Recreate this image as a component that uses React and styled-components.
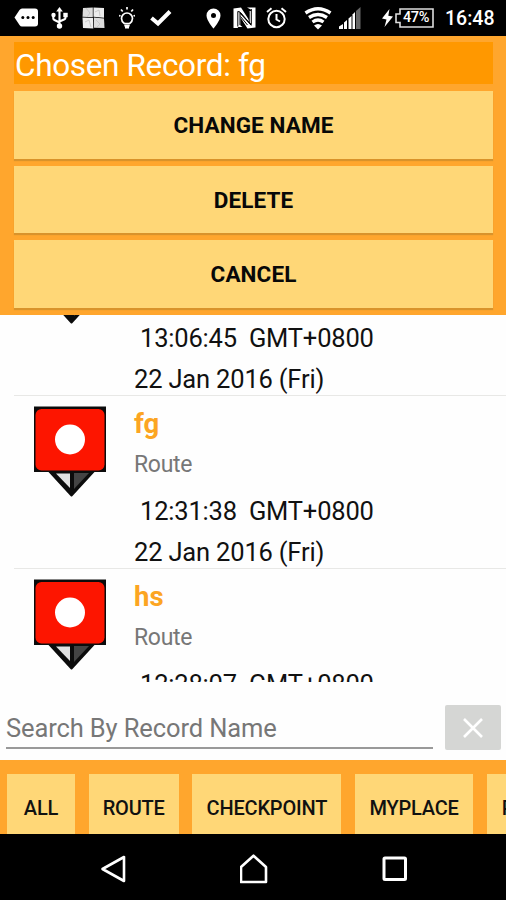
import styled, { createGlobalStyle } from "styled-components";

const actions = ["Change name", "Delete", "Cancel"];

const records = [
  { name: "gh", type: "Route", time: "13:06:45", date: "22 Jan 2016 (Fri)" },
  { name: "fg", type: "Route", time: "12:31:38", date: "22 Jan 2016 (Fri)" },
  { name: "hs", type: "Route", time: "12:28:07", date: "22 Jan 2016 (Fri)" },
];

const filters = [
  { label: "All", width: 68 },
  { label: "Route", width: 90 },
  { label: "Checkpoint", width: 149 },
  { label: "Myplace", width: 118 },
  { label: "Photo", width: 95 },
];

export default function App() {
  return (
    <>
      <GlobalStyle />
      <Screen>
        <StatusBar />
        <Panel>
          <Title>Chosen Record: fg</Title>
          {actions.map((action) => (
            <Action key={action}>{action}</Action>
          ))}
        </Panel>
        <List>
          {records.map((record) => (
            <Record key={record.name} {...record} />
          ))}
        </List>
        <SearchBar>
          <SearchInput placeholder="Search By Record Name" />
          <ClearButton title="clear">
            <svg width="20" height="20" viewBox="0 0 20 20">
              <path d="M1 1L19 19M19 1L1 19" stroke="#fff" strokeWidth="2.6" />
            </svg>
          </ClearButton>
        </SearchBar>
        <Filters>
          {filters.map(({ label, width }) => (
            <Filter key={label} $width={width}>
              {label}
            </Filter>
          ))}
        </Filters>
        <NavBar />
      </Screen>
    </>
  );
}

function Record({ name, type, time, date }) {
  return (
    <Row>
      <Marker />
      <Details>
        <Name>{name}</Name>
        <Type>{type}</Type>
        <Time>
          {time}
          <span>GMT+0800</span>
        </Time>
        <DateText>{date}</DateText>
      </Details>
    </Row>
  );
}

function Marker() {
  return (
    <MarkerIcon width="74" height="93" viewBox="0 0 74 93">
      <path d="M16 65H61L38.500 89.500Z" fill="#0c0c0c" stroke="#0c0c0c" strokeWidth="2" strokeLinejoin="round" />
      <path d="M23 67.500H37V82Z" fill="#e2e2e2" />
      <path d="M41 67H56L41 83Z" fill="#444" />
      <rect x="1" y="0.500" width="72" height="65.500" fill="#0c0c0c" />
      <rect x="2.500" y="3" width="69" height="61.500" rx="6" fill="#fd1500" />
      <circle cx="37" cy="33.500" r="15" fill="#fff" />
    </MarkerIcon>
  );
}

function StatusBar() {
  return (
    <Status>
      <StatusIcon $left={14} width="24" height="20" viewBox="0 0 24 20">
        <path d="M8 0.500H21Q24 0.500 24 3.500V15.500Q24 18.500 21 18.500H8Q6.500 18.500 5.500 17L0.500 9.500L5.500 2Q6.500 0.500 8 0.500Z" />
        <g fill="#000">
          <circle cx="8.800" cy="9.500" r="1.500" />
          <circle cx="14" cy="9.500" r="1.500" />
          <circle cx="19.200" cy="9.500" r="1.500" />
        </g>
      </StatusIcon>
      <StatusIcon $left={13} width="17" height="22" viewBox="0 0 17 22">
        <path d="M8.500 0L11.800 4.500H5.200Z" />
        <path d="M8.500 3V19M2.300 8V11.500Q2.300 12.500 3.500 13L8.500 15.500M14.500 8V10.500Q14.500 11.800 13.500 12.300L8.500 14.500" fill="none" stroke="#fff" strokeWidth="2.100" />
        <circle cx="8.500" cy="19" r="2.700" />
        <circle cx="2.500" cy="8" r="2.200" />
        <rect x="12.300" y="5.800" width="4.400" height="4.400" />
      </StatusIcon>
      <StatusIcon $left={14} width="23" height="22" viewBox="0 0 23 22">
        <path d="M1 1L10.800 0.500V10.300L0.500 9.800Z" fill="#ddd" />
        <path d="M11.500 0.500L22 1V10.800L11.500 9.800Z" fill="#ececec" />
        <path d="M0.500 10.500L11 11L11.300 21.500L1 21Z" fill="#eee" />
        <path d="M11.800 10.500L22 11.500L22.500 21L12 20.800Z" fill="#dcdcdc" />
        <path d="M4 1L8 6L5 10M13 5L17 3L18 9M3 15L7 13L9 20M14 13L18 17L15 20" fill="none" stroke="#bbb" strokeWidth="0.700" />
      </StatusIcon>
      <StatusIcon $left={14} width="16" height="22" viewBox="0 0 16 22">
        <g fill="none" stroke="#fff" strokeWidth="1.700">
          <path d="M5.300 16.500Q2.500 14.500 2.500 11.500A5.500 5.500 0 0 1 13.500 11.500Q13.500 14.500 10.700 16.500Z" />
          <path d="M5.300 18.500H10.700M6 20.500H10" strokeWidth="1.800" />
          <path d="M8 0V2.500M2 2.500L3.700 4.500M14 2.500L12.300 4.500M0 8.500L1.500 9M16 8.500L14.500 9" />
        </g>
      </StatusIcon>
      <StatusIcon $left={15} width="22" height="18" viewBox="0 0 22 18">
        <path d="M1.500 9L8 14.500L20 2.500" fill="none" stroke="#fff" strokeWidth="4" />
      </StatusIcon>
      <StatusIcon $left={34} width="15" height="21" viewBox="0 0 15 21">
        <path fillRule="evenodd" d="M7.500 0.500A7 7 0 0 1 14.500 7.500C14.500 12.500 7.500 20.500 7.500 20.500C7.500 20.500 0.500 12.500 0.500 7.500A7 7 0 0 1 7.500 0.500ZM7.500 5A2.500 2.500 0 1 0 7.500 10A2.500 2.500 0 1 0 7.500 5Z" />
      </StatusIcon>
      <StatusIcon $left={12} width="23" height="22" viewBox="0 0 23 22">
        <path d="M0.500 1.500L8 0.500L16 13V4.500L19 3.500V18L7 5V18L4.500 21H0.500Z" />
        <path d="M14 0.500H22.500V20.500L14.500 21.500L7.500 10.500V18.500L9.500 20H4V3.500L18.500 19V3Z" />
        <path d="M4.800 19.500V4.500L7 5V18M18.300 2V17.500L16.200 16V4.500M7.500 5.500L18 18M7.500 9.500L14.500 18" fill="none" stroke="#000" strokeWidth="1" />
      </StatusIcon>
      <StatusIcon $left={10} width="21" height="22" viewBox="0 0 21 22">
        <g fill="none" stroke="#fff" strokeWidth="2">
          <circle cx="10.500" cy="12" r="8.200" />
          <path d="M10.500 7V12.500L14 14.500M1 5L5.500 1.300M20 5L15.500 1.300" />
        </g>
      </StatusIcon>
      <StatusIcon $left={17} width="28" height="23" viewBox="0 0 28 23">
        <g fill="none" stroke="#fff" strokeWidth="3.400">
          <path d="M1.500 6Q14 -2.500 26.500 6" />
          <path d="M5 10.500Q14 4.500 23 10.500" />
          <path d="M8.500 15Q14 11 19.500 15" />
        </g>
        <path d="M10 18.500Q14 15.500 18 18.500L14 22.500Z" />
      </StatusIcon>
      <StatusIcon $left={7} width="22" height="22" viewBox="0 0 22 22">
        <path d="M0 22V19.500L4 17V22ZM5 22V15.500L8 13V22ZM9.500 22V11.500L12.500 9V22Z" />
        <path d="M13.500 22V7.500L16 5V22Z" />
        <path d="M17 22V4L21.500 0V22Z" fill="#666" />
      </StatusIcon>
      <StatusIcon $left={21} width="11" height="18" viewBox="0 0 11 18">
        <path d="M7.500 0L0 9.500L4.500 10.500L2.500 18L11 7.500L6.300 6.800Z" />
      </StatusIcon>
      <Battery>
        <svg width="39" height="20" viewBox="0 0 39 20">
          <path d="M5 1H38V19H5V14.500H1V6H5Z" fill="none" stroke="#ddd" strokeWidth="1.600" />
        </svg>
        <span>47%</span>
      </Battery>
      <Clock>16:48</Clock>
    </Status>
  );
}

function NavBar() {
  return (
    <Nav>
      <svg width="28" height="30" viewBox="0 0 28 30">
        <path d="M2.500 15L24 3V27Z" fill="none" stroke="#fff" strokeWidth="2.600" strokeLinejoin="round" />
      </svg>
      <svg width="30" height="30" viewBox="0 0 30 30">
        <path d="M1 28V13L13.500 1.700L26 13V28Z" fill="none" stroke="#fff" strokeWidth="2.600" strokeLinejoin="round" />
      </svg>
      <svg width="26" height="26" viewBox="0 0 26 26">
        <rect x="2" y="2" width="21.500" height="21.500" rx="1" fill="none" stroke="#fff" strokeWidth="3" />
      </svg>
    </Nav>
  );
}

const GlobalStyle = createGlobalStyle`
  * {
    box-sizing: border-box;
  }

  body {
    margin: 0;
    font-family: Roboto, "Liberation Sans", sans-serif;
  }
`;

const Screen = styled.div`
  display: flex;
  flex-direction: column;
  width: 506px;
  height: 900px;
  overflow: hidden;
  background: #fefefe;
`;

const Status = styled.div`
  display: flex;
  align-items: center;
  flex: 0 0 36px;
  color: white;
  background: black;
`;

const StatusIcon = styled.svg`
  flex: none;
  margin-left: ${(props) => props.$left}px;
  fill: white;
`;

const Battery = styled.div`
  display: grid;
  align-items: center;
  flex: none;
  margin-left: 2px;
  font-size: 14.5px;
  font-weight: 500;
  line-height: 20px;

  > * {
    grid-area: 1 / 1;
  }

  span {
    padding-left: 8px;
    letter-spacing: -0.4px;
  }
`;

const Clock = styled.div`
  margin-left: 11px;
  padding-top: 2px;
  font-size: 19.5px;
  font-weight: 500;
  line-height: 34px;
`;

const Panel = styled.div`
  display: flex;
  flex-direction: column;
  gap: 7px;
  flex: 0 0 279px;
  padding: 6px 13px 0 14px;
  background: #ffa62d;
`;

const Title = styled.div`
  height: 42px;
  padding-left: 1px;
  color: white;
  background: #ff9800;
  font-size: 31.5px;
  letter-spacing: -0.35px;
  line-height: 47px;
  white-space: nowrap;
`;

const Action = styled.button`
  height: 67.500px;
  border: none;
  padding: 1px 0 0;
  color: #080808;
  background: #ffd777;
  box-shadow: 0 2px 1px #d9932b;
  font-family: inherit;
  font-size: 22.5px;
  font-weight: 700;
  letter-spacing: 0.1px;
  text-transform: uppercase;
`;

const List = styled.div`
  flex: 0 0 367px;
  overflow: hidden;
`;

const Row = styled.div`
  display: flex;
  height: 173px;
  margin-left: 14px;
  border-bottom: 1px solid #e8e8e6;

  &:first-child {
    margin-top: -92px;
  }
`;

const MarkerIcon = styled.svg`
  flex: none;
  margin: 10px 27px 0 19px;
`;

const Details = styled.div`
  display: flex;
  flex-direction: column;
  color: #111;
  font-size: 25.5px;
  letter-spacing: -0.18px;
  line-height: 41px;
  white-space: nowrap;
`;

const Name = styled.div`
  height: 49px;
  color: #fca522;
  font-size: 27.5px;
  font-weight: 700;
  letter-spacing: 0;
  line-height: 55px;
`;

const Type = styled.div`
  height: 46px;
  color: #777;
  font-size: 23px;
  letter-spacing: -0.3px;
  line-height: 40px;
`;

const Time = styled.div`
  display: flex;
  gap: 12px;
  padding-left: 6px;
`;

const DateText = styled.div`
  height: 36px;
`;

const SearchBar = styled.div`
  display: flex;
  flex: 0 0 78px;
  gap: 12px;
  padding: 23px 5px 0 6px;
`;

const SearchInput = styled.input`
  width: 428px;
  height: 44px;
  border: none;
  border-bottom: 2px solid #999;
  padding: 4px 0 0;
  background: transparent;
  font-family: inherit;
  font-size: 25.5px;
  letter-spacing: -0.12px;
  outline: none;

  &::placeholder {
    color: #777;
    opacity: 1;
  }
`;

const ClearButton = styled.button`
  display: flex;
  align-items: center;
  justify-content: center;
  width: 56px;
  height: 45px;
  border: none;
  border-radius: 2px;
  padding: 0;
  background: #d5d6d4;
`;

const Filters = styled.div`
  display: flex;
  flex: 0 0 74px;
  gap: 13.700px;
  padding: 14px 0 0 7px;
  overflow: hidden;
  background: #ffa62d;
`;

const Filter = styled.button`
  flex: 0 0 ${(props) => props.$width}px;
  height: 68px;
  border: none;
  padding: 0;
  color: #111;
  background: #ffd777;
  font-family: inherit;
  font-size: 20px;
  font-weight: 500;
  letter-spacing: -0.2px;
  text-transform: uppercase;
`;

const Nav = styled.div`
  display: flex;
  align-items: center;
  justify-content: space-between;
  flex: 1;
  padding: 4px 98px 0 100px;
  background: black;
`;
